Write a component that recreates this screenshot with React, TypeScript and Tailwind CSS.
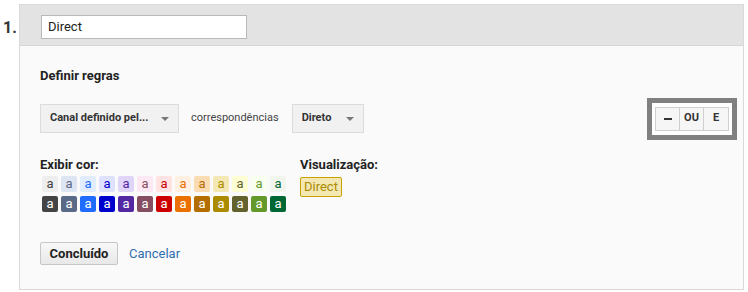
const swatches = [
  ["#eeeeee", "#444444"],
  ["#dee5f2", "#5a6986"],
  ["#e0ecff", "#206cff"],
  ["#dfe2ff", "#0000cc"],
  ["#e0d5f9", "#5229a3"],
  ["#fde9f4", "#854f61"],
  ["#ffe3e3", "#cc0000"],
  ["#fff0e1", "#ec7000"],
  ["#fadcb3", "#b36d00"],
  ["#f3e7b3", "#ab8b00"],
  ["#ffffd4", "#636330"],
  ["#f9ffef", "#64992c"],
  ["#f1f5ec", "#006633"],
];

function Arrow() {
  return <span className="ml-auto h-0 w-0 border-x-[4px] border-t-[4px] border-x-transparent border-t-[#777]" />;
}

export default function App() {
  return (
    <div className="relative h-[292px] w-[748px] bg-white text-[#222]" style={{ fontFamily: "Roboto, Arial, sans-serif" }}>
      <div className="absolute left-[3px] top-[12px] text-[16px] font-bold text-[#333]">1.</div>
      <div className="ml-[19px] mt-[4px] h-[286px] w-[725px] border border-[#d9d9d9] bg-[#fafafa]">
        <div className="flex h-[41px] items-center border-b border-[#d6d6d6] bg-[#e3e3e3] pl-[21px] pt-[4px]">
          <div className="flex h-[24px] w-[206px] items-center border border-[#b9b9b9] bg-white pl-[6px] text-[13px] text-[#222]">Direct</div>
        </div>
        <div className="pl-[20px] pr-[6px]">
          <div className="mt-[20px] text-[13px] font-bold text-[#222]">Definir regras</div>
          <div className="mt-[12px] flex items-center">
            <div className="flex h-[29px] w-[139px] items-center border border-[#dcdcdc] bg-[#f1f1f1] pl-[9px] pr-[9px] text-[11px] font-bold text-[#333]">
              Canal definido pel...<Arrow />
            </div>
            <span className="ml-[12px] text-[11px] text-[#444]">correspondências</span>
            <div className="ml-[13px] flex h-[29px] w-[72px] items-center border border-[#dcdcdc] bg-[#f1f1f1] pl-[9px] pr-[9px] text-[11px] font-bold text-[#333]">
              Direto<Arrow />
            </div>
            <div className="ml-auto flex h-[42px] w-[90px] items-center justify-center border-[5px] border-[#808080] bg-white">
              <div className="flex h-[24px] border border-[#cfcfcf] bg-[#f6f6f6] text-[11px] font-bold text-[#333]">
                <span className="flex w-[24px] items-center justify-center border-r border-[#cfcfcf]"><span className="h-[2px] w-[8px] bg-[#333]" /></span>
                <span className="flex w-[24px] items-center justify-center border-r border-[#cfcfcf]">OU</span>
                <span className="flex w-[24px] items-center justify-center">E</span>
              </div>
            </div>
          </div>
          <div className="mt-[15px] flex">
            <div>
              <div className="text-[13px] font-bold text-[#222]">Exibir cor:</div>
              <div className="ml-[2px] mt-[2px] flex gap-[3px]">
                {swatches.map(([bg, fg]) => (
                  <div key={bg} className="flex h-[16px] w-[16px] items-center justify-center rounded-[2px] pb-[1px] text-[13px] leading-none" style={{ backgroundColor: bg, color: fg }}>a</div>
                ))}
              </div>
              <div className="ml-[2px] mt-[4px] flex gap-[3px]">
                {swatches.map(([, fg]) => (
                  <div key={fg} className="flex h-[16px] w-[16px] items-center justify-center rounded-[2px] pb-[1px] text-[13px] leading-none text-white" style={{ backgroundColor: fg }}>a</div>
                ))}
              </div>
            </div>
            <div className="ml-[14px]">
              <div className="text-[13px] font-bold text-[#222]">Visualização:</div>
              <div className="mt-[3px] inline-flex h-[20px] items-center rounded-[2px] border border-[#c6a100] bg-[#f3e7b3] px-[3px] text-[13px] text-[#ab8b00]">Direct</div>
            </div>
          </div>
          <div className="mt-[30px] flex items-center">
            <div className="flex h-[23px] w-[78px] items-center justify-center rounded-[2px] border border-[#c6c6c6] bg-gradient-to-b from-[#f8f8f8] to-[#e8e8e8] text-[13px] font-bold text-[#222]">Concluído</div>
            <span className="ml-[11px] text-[13px] text-[#2f6fb0]">Cancelar</span>
          </div>
        </div>
      </div>
    </div>
  );
}
